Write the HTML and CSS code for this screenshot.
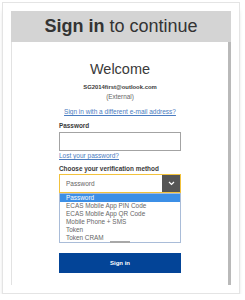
FILE: index.html
```html
<!DOCTYPE html>
<html lang="en">
<head>
    <meta charset="UTF-8">
    <meta name="viewport" content="width=device-width, initial-scale=1.0">
    <title>Sign in</title>
    <link rel="stylesheet" href="styles.css">
</head>
<body>

    <div class="frame">
        <div class="frame-title"><b>Sign in</b> to continue</div>

        <div class="panel">
            <h2 class="welcome">Welcome</h2>
            <div class="user-email">SG2014first@outlook.com</div>
            <div class="user-type">(External)</div>
            <a class="switch-link" href="#">Sign in with a different e-mail address?</a>

            <form class="login-form">
                <label for="password">Password</label>
                <input type="password" id="password" class="text-input">
                <a class="small-link" href="#">Lost your password?</a>

                <label for="method" class="method-label">Choose your verification method</label>
                <div class="select-box" id="method">
                    <span class="select-value">Password</span>
                    <span class="select-btn">
                        <svg width="7" height="5" viewBox="0 0 7 5"><polyline points="1,1 3.5,3.5 6,1" fill="none" stroke="#fff" stroke-width="1.2"/></svg>
                    </span>
                </div>
                <ul class="select-list">
                    <li class="selected">Password</li>
                    <li>ECAS Mobile App PIN Code</li>
                    <li>ECAS Mobile App QR Code</li>
                    <li>Mobile Phone + SMS</li>
                    <li>Token</li>
                    <li>Token CRAM</li>
                </ul>
                <div class="list-grip"></div>

                <button type="submit" class="submit-btn">Sign in</button>
            </form>
        </div>
    </div>

</body>
</html>
```

FILE: styles.css
```css
body {
    margin: 0;
    padding: 2px 0 0 2px;
    background-color: #fff;
    font-family: "Liberation Sans", Arial, sans-serif;
}

.frame {
    width: 220px;
    padding: 8px;
    background-color: #fff;
    border: 1px solid #e4e4e4;
    box-shadow: 0 6px 5px -3px rgba(0, 0, 0, 0.45);
}

.frame-title {
    height: 31px;
    line-height: 31px;
    background-color: #d4d4d4;
    color: #333;
    font-size: 18px;
    text-align: center;
}

.panel {
    height: 225px;
    padding-top: 18px;
    border-left: 1px solid #e2e2e2;
    border-right: 3px solid #b9b9b9;
    text-align: center;
    color: #3a3a3a;
}

.welcome {
    margin: 0;
    font-size: 14.5px;
    font-weight: normal;
    line-height: 18px;
}

.user-email {
    margin-top: 5px;
    font-size: 5.9px;
    font-weight: bold;
    line-height: 8px;
}

.user-type {
    margin-top: 2px;
    font-size: 6.4px;
    line-height: 8px;
    color: #666;
}

.switch-link {
    display: block;
    margin-top: 7px;
    font-size: 6.5px;
    line-height: 8px;
    color: #4a7cc0;
}

.login-form {
    width: 122px;
    margin: 6px auto 0;
    text-align: left;
}

.login-form label {
    display: block;
    font-size: 6.4px;
    font-weight: bold;
    line-height: 8px;
    color: #3a3a3a;
}

.text-input {
    display: block;
    box-sizing: border-box;
    width: 122px;
    height: 19px;
    margin: 2px 0 1px;
    padding: 0;
    border: 1px solid #a3a3a3;
}

.small-link {
    display: block;
    font-size: 6.5px;
    line-height: 8px;
    color: #4a7cc0;
}

.method-label {
    margin-top: 5px;
}

.select-box {
    display: flex;
    align-items: center;
    justify-content: space-between;
    box-sizing: border-box;
    height: 19px;
    margin-top: 1px;
    padding-left: 6px;
    border: 1px solid #f2c23c;
    font-size: 6.5px;
    color: #666;
}

.select-btn {
    display: flex;
    align-items: center;
    justify-content: center;
    width: 18px;
    height: 17px;
    background-color: #555;
}

.select-list {
    margin: 0;
    padding: 0;
    list-style: none;
    border: 1px solid #a9bcd8;
    font-size: 6.4px;
    line-height: 8px;
    color: #666;
}

.select-list li {
    padding-left: 6px;
}

.select-list .selected {
    background-color: #3c8fe6;
    color: #fff;
}

.list-grip {
    width: 20px;
    height: 2px;
    margin: -2px auto 0;
    background-color: #a8a8a8;
}

.submit-btn {
    display: block;
    width: 122px;
    height: 20px;
    margin-top: 10px;
    padding: 0;
    border: none;
    background-color: #034497;
    color: #fff;
    font-family: "Liberation Sans", Arial, sans-serif;
    font-size: 6px;
    font-weight: bold;
}
```
